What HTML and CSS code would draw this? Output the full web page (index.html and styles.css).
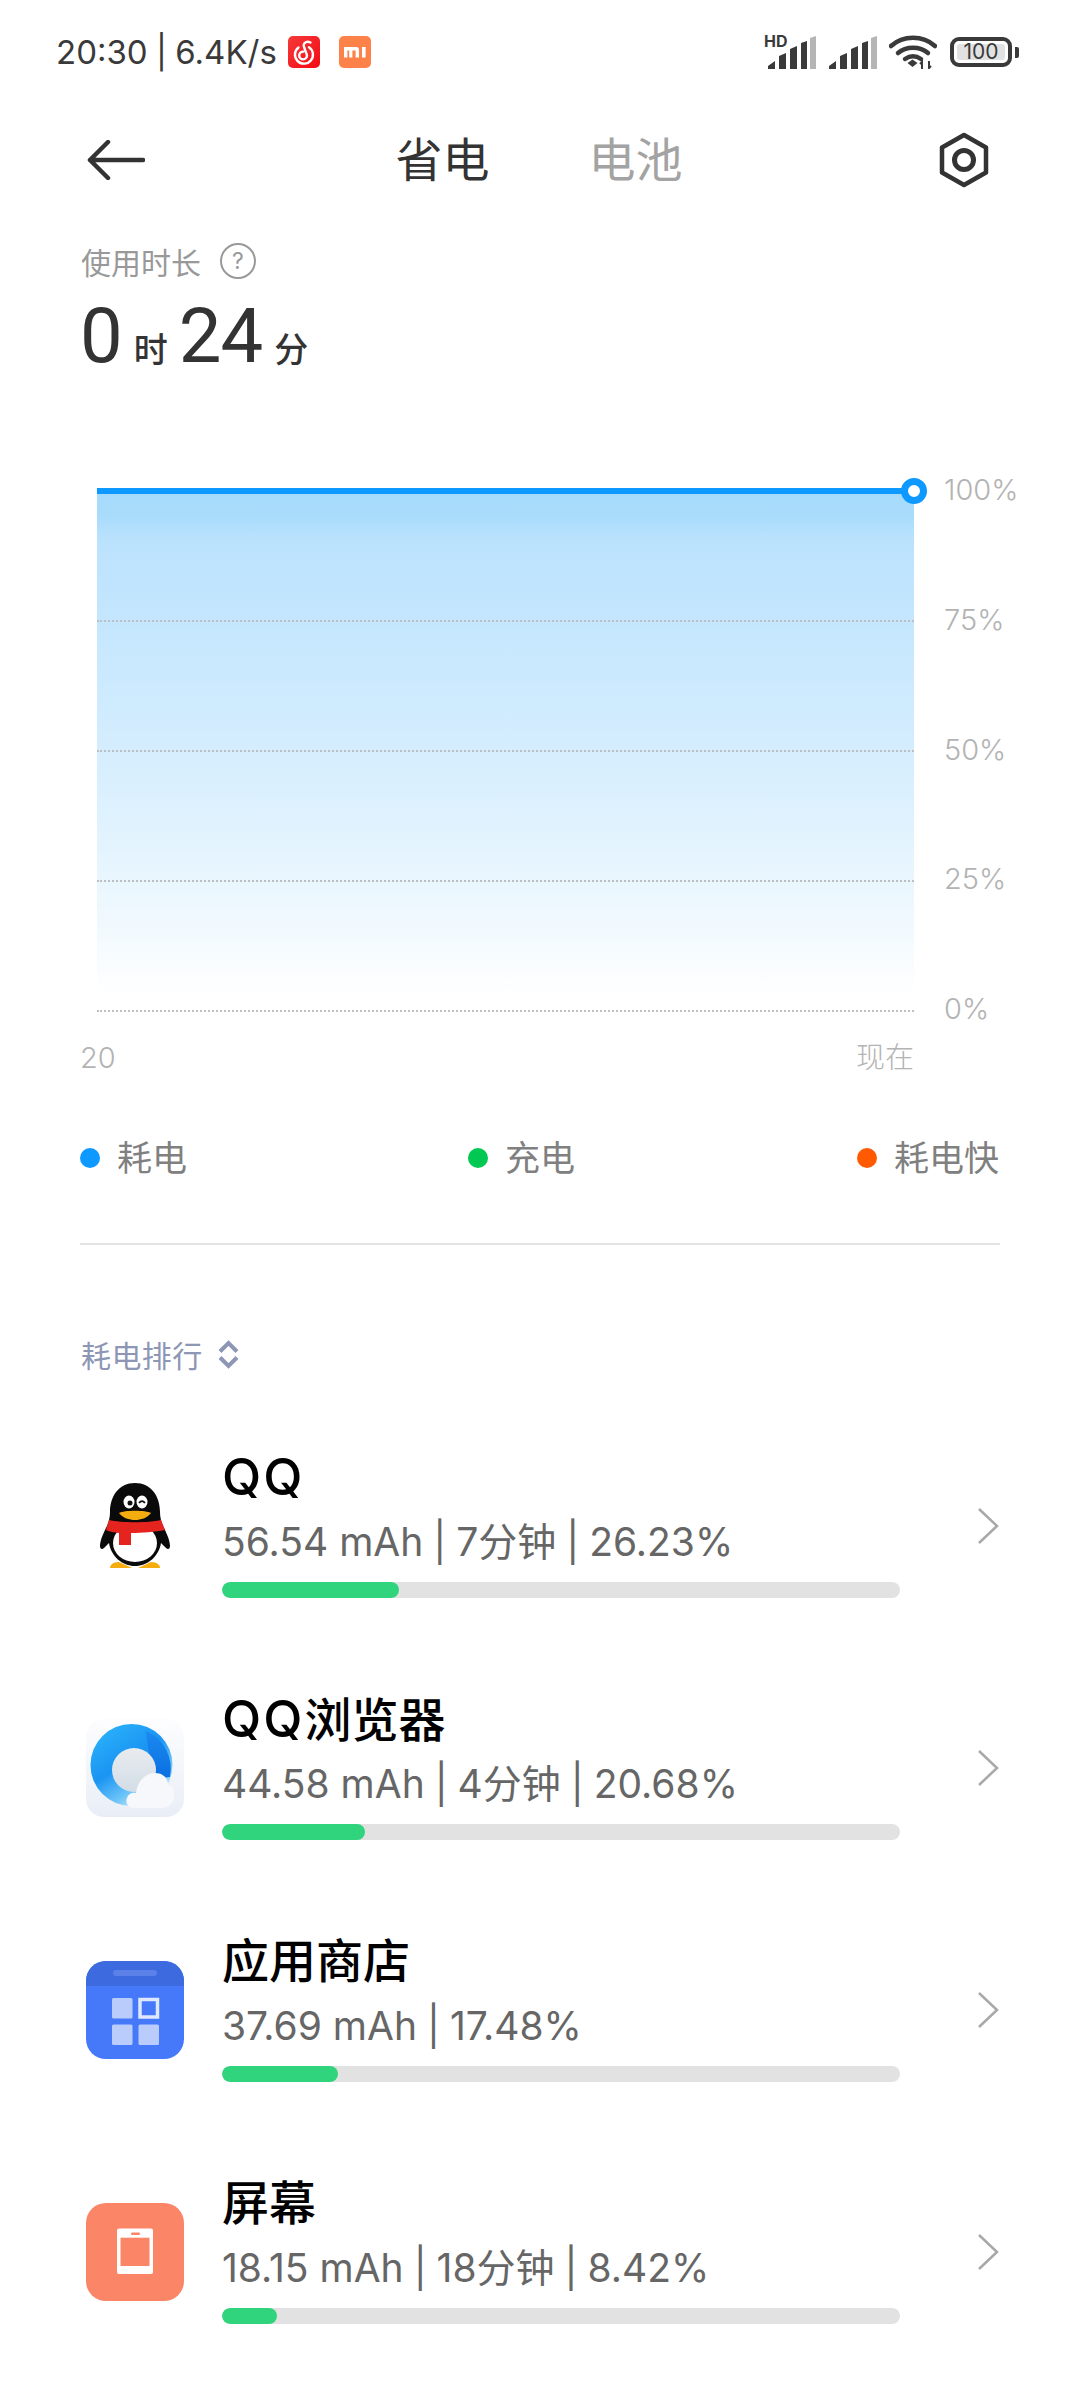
FILE: index.html
```html
<!DOCTYPE html>
<html lang="zh-CN">
<head>
    <meta charset="UTF-8">
    <title>电量</title>
    <link rel="stylesheet" href="styles.css">
</head>
<body>
<div class="page">

    <div class="status">
        <div class="status__left">
            <span class="status__time">20:30 <span class="sep">|</span> 6.4K/s</span>
            <svg class="status__app" viewBox="0 0 32 32">
                <defs>
                    <linearGradient id="neteaseBg" x1="0" y1="0" x2="1" y2="1">
                        <stop offset="0" stop-color="#f53a3a"/>
                        <stop offset="1" stop-color="#f50a12"/>
                    </linearGradient>
                </defs>
                <rect width="32" height="32" rx="5" fill="url(#neteaseBg)"/>
                <path d="M10.500 11.500a9 9 0 1 0 10.500-.3" fill="none" stroke="#fff" stroke-width="2.400" stroke-linecap="round"/>
                <path d="M22.500 6.500c-3-1.500-6.500-.5-6.800 2.500-.2 2 2.800 8 3.300 10.500a3.900 3.900 0 1 1-3.800-3.900" fill="none" stroke="#fff" stroke-width="2.400" stroke-linecap="round"/>
            </svg>
            <svg class="status__app status__app--mi" viewBox="0 0 32 32">
                <rect width="32" height="32" rx="5" fill="#fd8249"/>
                <path d="M5 11h12a3 3 0 0 1 3 3v7.500h-3.400v-7h-3.200v7h-3.200v-7H8.400v7H5zM23 11h3.600v10.500H23z" fill="#fff"/>
            </svg>
        </div>
        <div class="status__right">
            <div class="signal">
                <span class="signal__hd">HD</span>
                <svg class="signal__bars" viewBox="0 0 48 33">
                    <g fill="#3a3a3a"><path d="M0 33v-3l7-5v8zM11 33V20l7-3v16zM22 33V13l7-3v23zM33 33V7l6-2v28z"/></g>
                    <path d="M42 33V2l6-2v33z" fill="#b5b5b5"/>
                </svg>
            </div>
            <svg class="signal__bars signal__bars--second" viewBox="0 0 48 33">
                <g fill="#3a3a3a"><path d="M0 33v-3l7-5v8zM11 33V20l7-3v16zM22 33V13l7-3v23zM33 33V7l6-2v28z"/></g>
                <path d="M42 33V2l6-2v33z" fill="#b5b5b5"/>
            </svg>
            <svg class="wifi" viewBox="0 0 48 34">
                <g fill="none" stroke="#3a3a3a" stroke-width="4.500" stroke-linecap="round">
                    <path d="M2 11c12-11 32-11 44 0"/>
                    <path d="M9 18c8-7 22-7 30 0"/>
                    <path d="M16 24c5-3.500 11-3.500 16 0"/>
                </g>
                <path d="M18.500 28l5-3.500 5 3.500-5 4z" fill="#3a3a3a"/>
                <path d="M33 34v-7l-2 2M40 26v7l2-2" fill="none" stroke="#3a3a3a" stroke-width="2"/>
            </svg>
            <div class="battery">
                <div class="battery__body"><span class="battery__level">100</span></div>
                <div class="battery__nub"></div>
            </div>
        </div>
    </div>

    <div class="topbar">
        <svg class="topbar__back" viewBox="0 0 58 40">
            <path d="M21 2L3 20l18 18M3 20h53" fill="none" stroke="#333" stroke-width="4.500" stroke-linecap="round" stroke-linejoin="round"/>
        </svg>
        <div class="tabs">
            <span class="tabs__item tabs__item--active">省电</span>
            <span class="tabs__item">电池</span>
        </div>
        <svg class="topbar__gear" viewBox="0 0 50 56">
            <path d="M25 3l22 12.500v25L25 53 3 40.500v-25z" fill="none" stroke="#333" stroke-width="4.500" stroke-linejoin="round"/>
            <circle cx="25" cy="28" r="9.500" fill="none" stroke="#333" stroke-width="5"/>
        </svg>
    </div>

    <div class="usage">
        <div class="usage__label">
            <span>使用时长</span>
            <span class="usage__help">?</span>
        </div>
        <div class="usage__time">
            <span class="usage__num">0</span><span class="usage__unit">时</span>
            <span class="usage__num">24</span><span class="usage__unit">分</span>
        </div>
    </div>

    <div class="chart">
        <div class="chart__plot">
            <div class="chart__band"></div>
            <div class="chart__band"></div>
            <div class="chart__band"></div>
            <div class="chart__band"></div>
            <div class="chart__line"></div>
            <div class="chart__dot"></div>
        </div>
        <div class="chart__scale">
            <span>100%</span>
            <span>75%</span>
            <span>50%</span>
            <span>25%</span>
            <span>0%</span>
        </div>
    </div>

    <div class="axis">
        <span>20</span>
        <span>现在</span>
    </div>

    <div class="legend">
        <span class="legend__item"><i class="legend__dot legend__dot--blue"></i>耗电</span>
        <span class="legend__item"><i class="legend__dot legend__dot--green"></i>充电</span>
        <span class="legend__item"><i class="legend__dot legend__dot--orange"></i>耗电快</span>
    </div>

    <div class="divider"></div>

    <div class="sort">
        <span>耗电排行</span>
        <svg class="sort__icon" viewBox="0 0 21 29">
            <path d="M2 11.500l8.500-8.500 8.500 8.500M2 17.500l8.500 8.500 8.500-8.500" fill="none" stroke="#8d96b4" stroke-width="4"/>
        </svg>
    </div>

    <div class="apps">

        <div class="app">
            <svg class="app__icon" viewBox="0 0 98 98">
                <path d="M33 85c-6 0-9 3-9 6h22zM65 85c6 0 9 3 9 6H52z" fill="#f5ac0e"/>
                <path d="M49 6C33 6 24 19 24 35c0 5-1 9-3 14-3 6-7 14-7 20 0 3 2 4 4 2l5-5c2 13 13 23 26 23s24-10 26-23l5 5c2 2 4 1 4-2 0-6-4-14-7-20-2-5-3-9-3-14C74 19 65 6 49 6z" fill="#0a0a0a"/>
                <ellipse cx="49" cy="66" rx="22" ry="19" fill="#fff"/>
                <ellipse cx="43" cy="25" rx="5.500" ry="6.500" fill="#fff"/>
                <ellipse cx="56" cy="25" rx="5.500" ry="6.500" fill="#fff"/>
                <circle cx="44" cy="26" r="2.500" fill="#111"/>
                <path d="M53 26c2-2.500 4-2.500 6 0" fill="none" stroke="#111" stroke-width="1.800"/>
                <path d="M33 36c5-3 27-3 32 0-4 5-10 7-16 7s-12-2-16-7z" fill="#f5ac0e"/>
                <path d="M23 43c12 3 40 3 52 0l4 10c-10 2-23 3-34 3v12H33V56c-5-.500-9-1-13-3z" fill="#e5231f"/>
            </svg>
            <div class="app__info">
                <div class="app__name"><span class="app__latin">QQ</span></div>
                <div class="app__stats">56.54 mAh <span class="sep">|</span> 7分钟 <span class="sep">|</span> 26.23%</div>
                <div class="app__bar"><div class="app__fill" style="width: 26.1%"></div></div>
            </div>
            <svg class="app__arrow" viewBox="0 0 24 40">
                <path d="M3 3l18 17L3 37" fill="none" stroke="#a8a8a8" stroke-width="2.500"/>
            </svg>
        </div>

        <div class="app">
            <svg class="app__icon" viewBox="0 0 98 98">
                <defs>
                    <linearGradient id="browserBg" x1="0" y1="0" x2="0" y2="1">
                        <stop offset="0" stop-color="#fdfdfe"/>
                        <stop offset="1" stop-color="#e9eef6"/>
                    </linearGradient>
                    <linearGradient id="browserRing" x1="0.100" y1="0.100" x2="0.700" y2="1">
                        <stop offset="0" stop-color="#2ab0fa"/>
                        <stop offset="0.450" stop-color="#1a94f2"/>
                        <stop offset="0.750" stop-color="#6cc4f7"/>
                        <stop offset="1" stop-color="#d6effc"/>
                    </linearGradient>
                    <linearGradient id="browserDark" x1="0" y1="0" x2="0" y2="1">
                        <stop offset="0" stop-color="#1a8af0"/>
                        <stop offset="1" stop-color="#0b6fe0"/>
                    </linearGradient>
                    <linearGradient id="browserHole" x1="0" y1="0" x2="0" y2="1">
                        <stop offset="0" stop-color="#e9ecf0"/>
                        <stop offset="1" stop-color="#d3dde6"/>
                    </linearGradient>
                </defs>
                <rect width="98" height="98" rx="18" fill="url(#browserBg)"/>
                <circle cx="45.500" cy="46" r="41" fill="url(#browserRing)"/>
                <path d="M60 12a41 41 0 0 1 24 46L66 60z" fill="url(#browserDark)"/>
                <circle cx="48" cy="51" r="22" fill="url(#browserHole)"/>
                <path d="M48 89c-6 0-9-5-7-10 1-4 5-6 9-5 1-11 9-20 19-20 8 0 13 5 13 12 4 1 6 5 6 10 0 8-5 13-12 13z" fill="#f6f8fb"/>
            </svg>
            <div class="app__info">
                <div class="app__name"><span class="app__latin">QQ</span>浏览器</div>
                <div class="app__stats">44.58 mAh <span class="sep">|</span> 4分钟 <span class="sep">|</span> 20.68%</div>
                <div class="app__bar"><div class="app__fill" style="width: 21.1%"></div></div>
            </div>
            <svg class="app__arrow" viewBox="0 0 24 40">
                <path d="M3 3l18 17L3 37" fill="none" stroke="#a8a8a8" stroke-width="2.500"/>
            </svg>
        </div>

        <div class="app">
            <svg class="app__icon" viewBox="0 0 98 98">
                <rect width="98" height="98" rx="20" fill="#4579f9"/>
                <path d="M0 25V20A20 20 0 0 1 20 0h58a20 20 0 0 1 20 20v5z" fill="#3e6ae0"/>
                <rect x="27" y="9" width="44" height="6" rx="3" fill="#5b80e8"/>
                <rect x="26" y="37" width="20.500" height="20.500" rx="1.500" fill="#b9ccfb"/>
                <rect x="54" y="38.500" width="17.500" height="17.500" fill="#4579f9" stroke="#dfe8fe" stroke-width="3.500"/>
                <rect x="26" y="63.500" width="20.500" height="20.500" rx="1.500" fill="#b9ccfb"/>
                <rect x="52.500" y="63.500" width="20.500" height="20.500" rx="1.500" fill="#b9ccfb"/>
            </svg>
            <div class="app__info">
                <div class="app__name">应用商店</div>
                <div class="app__stats">37.69 mAh <span class="sep">|</span> 17.48%</div>
                <div class="app__bar"><div class="app__fill" style="width: 17.1%"></div></div>
            </div>
            <svg class="app__arrow" viewBox="0 0 24 40">
                <path d="M3 3l18 17L3 37" fill="none" stroke="#a8a8a8" stroke-width="2.500"/>
            </svg>
        </div>

        <div class="app">
            <svg class="app__icon" viewBox="0 0 98 98">
                <rect width="98" height="98" rx="20" fill="#fb8567"/>
                <rect x="31" y="25.500" width="36" height="45.500" rx="2" fill="#fff"/>
                <rect x="34.500" y="34.700" width="29" height="28.300" fill="#fb8567"/>
                <rect x="45" y="29.500" width="9" height="2.500" rx="1.200" fill="#fb8567"/>
            </svg>
            <div class="app__info">
                <div class="app__name">屏幕</div>
                <div class="app__stats">18.15 mAh <span class="sep">|</span> 18分钟 <span class="sep">|</span> 8.42%</div>
                <div class="app__bar"><div class="app__fill" style="width: 8.1%"></div></div>
            </div>
            <svg class="app__arrow" viewBox="0 0 24 40">
                <path d="M3 3l18 17L3 37" fill="none" stroke="#a8a8a8" stroke-width="2.500"/>
            </svg>
        </div>

    </div>
</div>
</body>
</html>
```

FILE: styles.css
```css
html, body {
    margin: 0;
    padding: 0;
    background: #fff;
}

.page {
    width: 1080px;
    height: 2400px;
    overflow: hidden;
    font-family: "Inter", "Noto Sans CJK SC", sans-serif;
    color: #333;
}

.sep {
    margin: 0 -1px;
}

/* status bar */
.status {
    display: flex;
    justify-content: space-between;
    align-items: center;
    height: 104px;
    padding: 0 61px 0 56px;
}
.status__left {
    display: flex;
    align-items: center;
}
.status__time {
    font-size: 33px;
    color: #3a3a3a;
    line-height: 40px;
}
.status__app {
    width: 32px;
    height: 32px;
    margin-left: 11px;
}
.status__app--mi {
    margin-left: 19px;
}
.status__right {
    display: flex;
    align-items: center;
}
.signal {
    display: flex;
    align-items: flex-end;
    position: relative;
}
.signal__hd {
    position: absolute;
    left: -4px;
    top: -3px;
    font-size: 16px;
    font-weight: 700;
    line-height: 16px;
    color: #3a3a3a;
}
.signal__bars {
    display: block;
    width: 48px;
    height: 33px;
}
.signal__bars--second {
    margin-left: 13px;
}
.wifi {
    display: block;
    width: 48px;
    height: 34px;
    margin-left: 12px;
}
.battery {
    display: flex;
    align-items: center;
    margin-left: 13px;
}
.battery__body {
    box-sizing: border-box;
    width: 62px;
    height: 30px;
    padding: 3px;
    border: 4px solid #3a3a3a;
    border-radius: 9px;
}
.battery__level {
    display: block;
    height: 16px;
    line-height: 16px;
    background: #e2e2e2;
    border-radius: 3px;
    font-size: 21px;
    text-align: center;
    color: #3a3a3a;
}
.battery__nub {
    width: 4px;
    height: 11px;
    margin-left: 3px;
    background: #3a3a3a;
    border-radius: 0 2px 2px 0;
}

/* title bar */
.topbar {
    display: flex;
    align-items: center;
    height: 112px;
    padding: 0 91px 0 87px;
}
.topbar__back {
    width: 58px;
    height: 40px;
}
.topbar__gear {
    width: 50px;
    height: 56px;
}
.tabs {
    display: flex;
    flex: 1;
    justify-content: center;
    gap: 99px;
    margin-right: 6px;
}
.tabs__item {
    font-size: 47px;
    line-height: 60px;
    color: #a3a3a3;
}
.tabs__item--active {
    color: #333;
}

/* usage */
.usage {
    padding: 29px 0 0 80px;
}
.usage__label {
    display: flex;
    align-items: center;
    height: 32px;
    padding-left: 1px;
    font-size: 30px;
    color: #999;
}
.usage__help {
    box-sizing: border-box;
    width: 36px;
    height: 36px;
    margin-left: 19px;
    border: 2px solid #999;
    border-radius: 50%;
    font-size: 23px;
    line-height: 32px;
    text-align: center;
}
.usage__time {
    display: flex;
    align-items: baseline;
    height: 80px;
    margin-top: 19px;
    line-height: 80px;
}
.usage__num {
    font-family: "Roboto", sans-serif;
    font-size: 76px;
    letter-spacing: -1px;
}
.usage__unit {
    margin: 0 11px 0 12px;
    font-size: 34px;
    font-weight: 500;
}

/* chart */
.chart {
    display: flex;
    margin-top: 115px;
    padding-left: 97px;
}
.chart__plot {
    box-sizing: border-box;
    position: relative;
    width: 817px;
    height: 521px;
    padding-top: 1px;
    background: linear-gradient(#a6dbfb 0, #a9dcfb 26px, #bbe2fd 50px, #c8e8fe 160px, #d9effe 290px, #eef8fe 420px, #fff 505px);
}
.chart__band {
    box-sizing: border-box;
    height: 130px;
    border-bottom: 2px dotted #bcc0c2;
}
.chart__line {
    position: absolute;
    left: 0;
    right: 0;
    top: -3px;
    height: 6px;
    background: #0d99ff;
}
.chart__dot {
    box-sizing: border-box;
    position: absolute;
    right: -13px;
    top: -13px;
    width: 26px;
    height: 26px;
    border: 7px solid #0d99ff;
    border-radius: 50%;
    background: #fff;
}
.chart__scale {
    display: flex;
    flex-direction: column;
    justify-content: space-between;
    height: 559px;
    margin: -21px 0 0 30px;
    font-size: 29px;
    font-weight: 300;
    line-height: 40px;
    color: #b3b3b3;
}
.axis {
    display: flex;
    justify-content: space-between;
    width: 834px;
    height: 40px;
    margin-top: 9px;
    padding-left: 80px;
    font-size: 29px;
    font-weight: 300;
    line-height: 40px;
    color: #b3b3b3;
}

/* legend */
.legend {
    display: grid;
    grid-template-columns: 388px 389px auto;
    height: 44px;
    margin-top: 58px;
    padding-left: 80px;
}
.legend__item {
    display: flex;
    align-items: center;
    font-size: 35px;
    line-height: 44px;
    color: #808080;
}
.legend__dot {
    width: 20px;
    height: 20px;
    margin-right: 17px;
    border-radius: 50%;
}
.legend__dot--blue {
    background: #0d99ff;
}
.legend__dot--green {
    background: #00c853;
}
.legend__dot--orange {
    background: #ff5a00;
}
.divider {
    height: 2px;
    margin: 63px 80px 0 80px;
    background: #e4e4e4;
}

/* ranking */
.sort {
    display: flex;
    align-items: center;
    height: 36px;
    margin-top: 91px;
    padding-left: 81px;
    font-size: 30px;
    letter-spacing: .4px;
    color: #8d96b4;
}
.sort__icon {
    width: 21px;
    height: 29px;
    margin-left: 15px;
}
.apps {
    display: flex;
    flex-direction: column;
    gap: 91px;
    margin-top: 75px;
    padding-left: 86px;
}
.app {
    display: flex;
    align-items: flex-start;
}
.app__icon {
    flex: none;
    width: 98px;
    height: 98px;
    margin-top: 30px;
}
.app__info {
    width: 678px;
    margin-left: 38px;
}
.app__name {
    height: 60px;
    font-size: 47px;
    font-weight: 500;
    line-height: 60px;
    color: #000;
}
.app__latin {
    font-size: 51px;
    letter-spacing: 2px;
}
.app__stats {
    margin-top: 8px;
    font-size: 39px;
    line-height: 54px;
    color: #666;
}
.app__bar {
    height: 16px;
    margin-top: 13px;
    background: #e2e2e2;
    border-radius: 8px;
    overflow: hidden;
}
.app__fill {
    height: 100%;
    background: #2fd47c;
    border-radius: 8px;
}
.app__arrow {
    flex: none;
    width: 24px;
    height: 40px;
    margin: 59px 0 0 76px;
}
```
